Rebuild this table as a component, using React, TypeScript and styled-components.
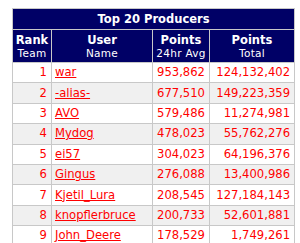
import styled, { createGlobalStyle } from "styled-components";

const producers = [
  { rank: 1, user: "war", avg: "953,862", total: "124,132,402" },
  { rank: 2, user: "-alias-", avg: "677,510", total: "149,223,359" },
  { rank: 3, user: "AVO", avg: "579,486", total: "11,274,981" },
  { rank: 4, user: "Mydog", avg: "478,023", total: "55,762,276" },
  { rank: 5, user: "ei57", avg: "304,023", total: "64,196,376" },
  { rank: 6, user: "Gingus", avg: "276,088", total: "13,400,986" },
  { rank: 7, user: "Kjetil_Lura", avg: "208,545", total: "127,184,143" },
  { rank: 8, user: "knopflerbruce", avg: "200,733", total: "52,601,881" },
  { rank: 9, user: "John_Deere", avg: "178,529", total: "1,749,261" },
];

const columns = [
  { main: "Rank", sub: "Team", w: 39 },
  { main: "User", sub: "Name", w: 101 },
  { main: "Points", sub: "24hr Avg", w: 57 },
  { main: "Points", sub: "Total", w: 85 },
];

const GlobalStyle = createGlobalStyle`
  body {
    margin: 0;
    background: #fff;
    font-family: "DejaVu Sans", Verdana, sans-serif;
  }
`;

const Page = styled.div`
  padding: 8px 0 0 12px;
`;

const Table = styled.table`
  border-collapse: collapse;
  border: 1px solid #c8c8c8;
  table-layout: fixed;
  width: 282px;
`;

const Col = styled.col<{ w: number }>`
  width: ${({ w }) => w}px;
`;

const TitleCell = styled.th`
  background: #000066;
  color: #fff;
  font-size: 11.5px;
  font-weight: bold;
  height: 20px;
  padding: 0;
  border: 1px solid #c8c8c8;
  text-align: center;
  line-height: 19px;
`;

const HeadCell = styled.th`
  background: #000066;
  color: #fff;
  height: 31px;
  padding: 1px 0 0;
  border: 1px solid #c8c8c8;
  text-align: center;
  vertical-align: middle;
`;

const HeadMain = styled.div`
  font-size: 11.5px;
  font-weight: bold;
  line-height: 14px;
`;

const HeadSub = styled.div`
  font-size: 10.5px;
  font-weight: normal;
  line-height: 13px;
  letter-spacing: 0.3px;
`;

const Row = styled.tr<{ even: boolean }>`
  background: ${({ even }) => (even ? "#f0f0f0" : "#fff")};
`;

const Cell = styled.td<{ align: "left" | "right" }>`
  height: 19.4px;
  padding: 0 4px 0 3px;
  border: 1px solid #c8c8c8;
  font-size: 11.6px;
  line-height: 19px;
  color: #ff0000;
  text-align: ${({ align }) => align};
  white-space: nowrap;
  overflow: hidden;
`;

const UserLink = styled.a`
  color: #ff0000;
  text-decoration: underline;
`;

export default function App() {
  return (
    <Page>
      <GlobalStyle />
      <Table>
        <colgroup>
          {columns.map((c, i) => (
            <Col key={i} w={c.w} />
          ))}
        </colgroup>
        <thead>
          <tr>
            <TitleCell colSpan={4}>Top 20 Producers</TitleCell>
          </tr>
          <tr>
            {columns.map((c, i) => (
              <HeadCell key={i}>
                <HeadMain>{c.main}</HeadMain>
                <HeadSub>{c.sub}</HeadSub>
              </HeadCell>
            ))}
          </tr>
        </thead>
        <tbody>
          {producers.map((p) => (
            <Row key={p.rank} even={p.rank % 2 === 0}>
              <Cell align="right">{p.rank}</Cell>
              <Cell align="left">
                <UserLink href="#">{p.user}</UserLink>
              </Cell>
              <Cell align="right">{p.avg}</Cell>
              <Cell align="right">{p.total}</Cell>
            </Row>
          ))}
        </tbody>
      </Table>
    </Page>
  );
}
